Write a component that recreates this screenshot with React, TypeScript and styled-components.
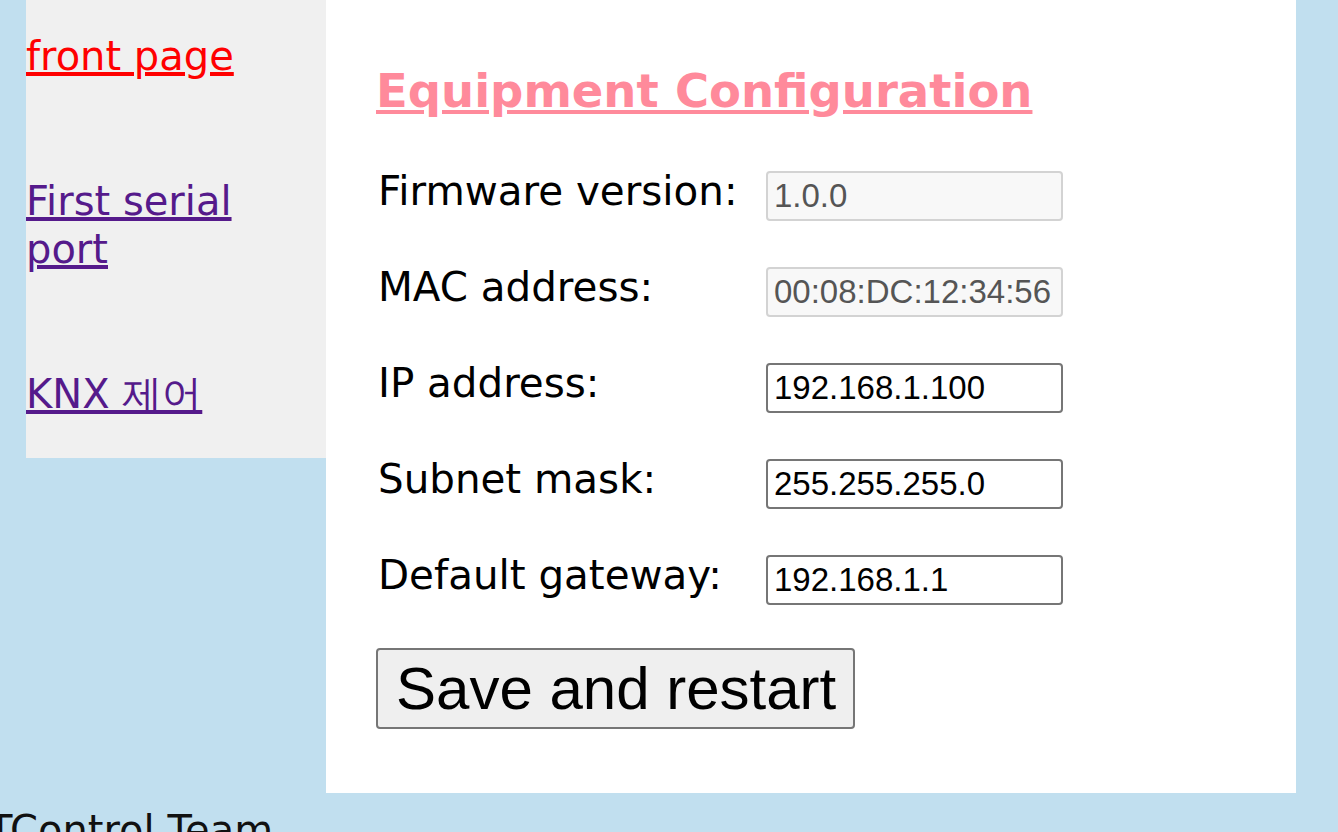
import React from "react";
import styled, { createGlobalStyle } from "styled-components";

const GlobalStyle = createGlobalStyle`
  html, body {
    margin: 0;
    padding: 0;
    background: #c1dfef;
    font-family: "DejaVu Sans", Verdana, sans-serif;
    overflow: hidden;
  }
`;

const Page = styled.div`
  width: 1338px;
  height: 832px;
  overflow: hidden;
  display: flex;
  flex-direction: column;
`;

const Layout = styled.div`
  display: flex;
  align-items: flex-start;
  padding-left: 26px;
`;

const Sidebar = styled.nav`
  width: 300px;
  background: #f0f0f0;
  display: flex;
  flex-direction: column;
  gap: 97px;
  padding: 32px 0 40px;
`;

const NavLink = styled.a<{ $current?: boolean }>`
  display: block;
  font-size: 40px;
  line-height: 48px;
  color: ${(p) => (p.$current ? "#ff0000" : "#551a8b")};
  text-decoration: underline;
  cursor: pointer;
`;

const Main = styled.main`
  width: 970px;
  background: #ffffff;
  padding: 66px 0 64px 50px;
  box-sizing: border-box;
  display: flex;
  flex-direction: column;
  align-items: flex-start;
`;

const Title = styled.a`
  display: block;
  font-size: 46.5px;
  line-height: 50px;
  font-weight: bold;
  color: #ff8a9b;
  text-decoration: underline;
  margin: 0 0 55px 0;
`;

const Form = styled.form`
  display: flex;
  flex-direction: column;
  align-items: flex-start;
`;

const Fields = styled.div`
  display: grid;
  grid-template-columns: 390px 297px;
  row-gap: 46px;
  align-items: start;
`;

const Label = styled.label`
  font-size: 40.4px;
  line-height: 40px;
  color: #000;
  padding-left: 2px;
  white-space: nowrap;
`;

const Field = styled.input<{ readOnly?: boolean }>`
  box-sizing: border-box;
  width: 297px;
  height: 50px;
  margin: 0;
  padding: 0 6px;
  font-family: "Liberation Sans", Arial, sans-serif;
  font-size: 33px;
  border-radius: 4px;
  border: 2px solid ${(p) => (p.readOnly ? "#d3d3d3" : "#767676")};
  background: ${(p) => (p.readOnly ? "#f8f8f8" : "#ffffff")};
  color: ${(p) => (p.readOnly ? "#555555" : "#000000")};
  outline: none;
`;

const SaveButton = styled.button`
  margin-top: 43px;
  box-sizing: border-box;
  height: 81px;
  padding: 0 17px 0 18px;
  font-family: "Liberation Sans", Arial, sans-serif;
  font-size: 60px;
  color: #000;
  background: #efefef;
  border: 2px solid #767676;
  border-radius: 4px;
  cursor: pointer;
`;

const Footer = styled.footer`
  margin-top: 13px;
  font-size: 40px;
  line-height: 48px;
  color: #111;
  white-space: nowrap;
  text-indent: -12px;
`;

const fields = [
  { label: "Firmware version:", value: "1.0.0", readOnly: true },
  { label: "MAC address:", value: "00:08:DC:12:34:56", readOnly: true },
  { label: "IP address:", value: "192.168.1.100", readOnly: false },
  { label: "Subnet mask:", value: "255.255.255.0", readOnly: false },
  { label: "Default gateway:", value: "192.168.1.1", readOnly: false },
];

export default function App() {
  return (
    <Page>
      <GlobalStyle />
      <Layout>
        <Sidebar>
          <NavLink $current>front page</NavLink>
          <NavLink>First serial port</NavLink>
          <NavLink>KNX 제어</NavLink>
        </Sidebar>
        <Main>
          <Title>Equipment Configuration</Title>
          <Form onSubmit={(e) => e.preventDefault()}>
            <Fields>
              {fields.map((f) => (
                <React.Fragment key={f.label}>
                  <Label>{f.label}</Label>
                  <Field defaultValue={f.value} readOnly={f.readOnly} />
                </React.Fragment>
              ))}
            </Fields>
            <SaveButton type="submit">Save and restart</SaveButton>
          </Form>
        </Main>
      </Layout>
      <Footer>TControl Team</Footer>
    </Page>
  );
}
